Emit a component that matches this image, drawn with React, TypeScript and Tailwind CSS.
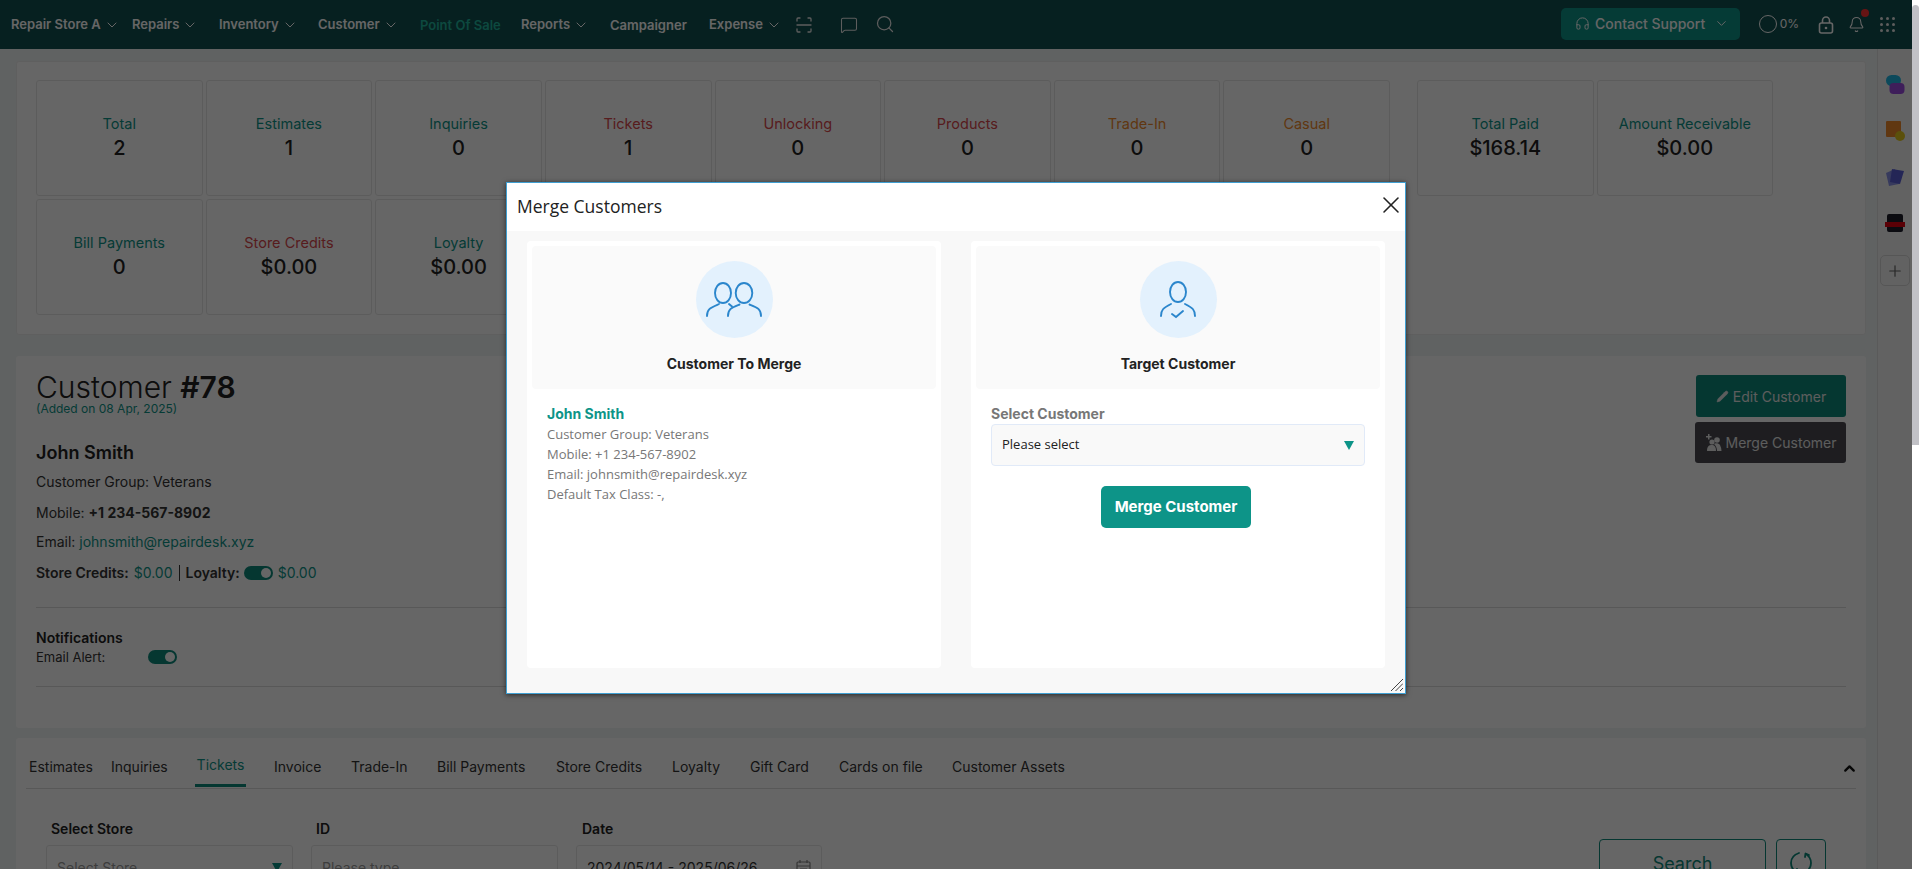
import { Bell, ChevronDown, ChevronUp, Headphones, MessageSquare, Pencil, Plus, Search, X } from 'lucide-react';

const inter = "font-['Inter',sans-serif]";
const openSans = "font-['Open_Sans',sans-serif]";

const navItems = [
  { label: 'Repair Store A', width: 'w-[121px]', arrow: true },
  { label: 'Repairs', width: 'w-[87px]', arrow: true },
  { label: 'Inventory', width: 'w-[99px]', arrow: true },
  { label: 'Customer', width: 'w-[102px]', arrow: true },
  { label: 'Point Of Sale', width: 'w-[101px]', active: true },
  { label: 'Reports', width: 'w-[89px]', arrow: true },
  { label: 'Campaigner', width: 'w-[99px]' },
  { label: 'Expense', width: 'w-[87px]', arrow: true },
];

const stats = [
  { label: 'Total', value: '2', color: 'text-[#0d9488]' },
  { label: 'Estimates', value: '1', color: 'text-[#0d9488]' },
  { label: 'Inquiries', value: '0', color: 'text-[#0d9488]' },
  { label: 'Tickets', value: '1', color: 'text-[#d9484c]' },
  { label: 'Unlocking', value: '0', color: 'text-[#d9484c]' },
  { label: 'Products', value: '0', color: 'text-[#d9484c]' },
  { label: 'Trade-In', value: '0', color: 'text-[#f08a2c]' },
  { label: 'Casual', value: '0', color: 'text-[#f08a2c]' },
  { label: 'Bill Payments', value: '0', color: 'text-[#0d9488]' },
  { label: 'Store Credits', value: '$0.00', color: 'text-[#d9484c]' },
  { label: 'Loyalty', value: '$0.00', color: 'text-[#0d9488]' },
];

const tabs = [
  { label: 'Estimates', width: 'w-[82px]' },
  { label: 'Inquiries', width: 'w-[86px]' },
  { label: 'Tickets', width: 'w-[77px]', active: true },
  { label: 'Invoice', width: 'w-[77px]' },
  { label: 'Trade-In', width: 'w-[86px]' },
  { label: 'Bill Payments', width: 'w-[119px]' },
  { label: 'Store Credits', width: 'w-[116px]' },
  { label: 'Loyalty', width: 'w-[78px]' },
  { label: 'Gift Card', width: 'w-[89px]' },
  { label: 'Cards on file', width: 'w-[113px]' },
  { label: 'Customer Assets', width: 'w-[120px]' },
];

function StatCell({ label, value, color }: { label: string; value: string; color: string }) {
  return (
    <div className="h-[116px] rounded-[3px] border border-[#e6e6e6] flex flex-col items-center justify-center pt-[1px]">
      <div className={`text-[14.5px] leading-[20px] ${color}`}>{label}</div>
      <div className="text-[20px] leading-[29px] font-medium text-[#222]">{value}</div>
    </div>
  );
}

function Toggle() {
  return (
    <span className="inline-flex w-[29px] h-[14px] rounded-full bg-[#0d8a7c] items-center justify-end pr-[2px]">
      <span className="w-[10px] h-[10px] rounded-full bg-white" />
    </span>
  );
}

function TwoUsers() {
  return (
    <svg width="56" height="35" viewBox="0 0 56 35" fill="none" stroke="#2b86cc" strokeWidth="1.9" strokeLinecap="round">
      <ellipse cx="17" cy="11" rx="8" ry="10" />
      <ellipse cx="38" cy="11" rx="8.300" ry="10" />
      <path d="M1 34 C1 27 4 26 13 22" />
      <path d="M23 22 L26 24.500" />
      <path d="M22 34 C22 27 25 26 33.500 22.500" />
      <path d="M43.500 22.500 C52 26 55 27 55 34" />
    </svg>
  );
}

function UserCheck() {
  return (
    <svg width="36" height="38" viewBox="0 0 36 38" fill="none" stroke="#2b86cc" strokeWidth="1.9" strokeLinecap="round">
      <ellipse cx="18" cy="11" rx="8" ry="10" />
      <path d="M1 35 C1 29 3 27 11 23" />
      <path d="M25 23 C33 27 35 29 35 35" />
      <path d="M12 33 L16 36 L23 30" />
    </svg>
  );
}

function ScanIcon() {
  return (
    <svg width="16" height="16" viewBox="0 0 16 16" fill="none" stroke="#e8e8e8" strokeWidth="1.3" strokeLinecap="round">
      <path d="M1 4 V2 Q1 1 2 1 H4 M12 1 H14 Q15 1 15 2 V4 M15 12 V14 Q15 15 14 15 H12 M4 15 H2 Q1 15 1 14 V12 M1 8 H15" />
    </svg>
  );
}

function LockIcon() {
  return (
    <svg className="ml-[19px]" width="16" height="18" viewBox="0 0 16 18" fill="none" stroke="#fff" strokeWidth="1.6">
      <rect x="1.500" y="7" width="13" height="10" rx="2" />
      <path d="M4.500 7 V4.500 A3.500 3.500 0 0 1 11.500 4.500 V7" />
      <circle cx="8" cy="12" r="1.300" fill="#fff" stroke="none" />
    </svg>
  );
}

function RefreshIcon() {
  return (
    <svg width="22" height="26" viewBox="0 0 22 26" fill="none" stroke="#0d8a7c" strokeWidth="1.8" strokeLinecap="round" strokeLinejoin="round">
      <path d="M9 3 C3 5 1 9 1 13 C1 17 3 20 6 22" />
      <path d="M13 23 C19 21 21 17 21 13 C21 9 19 6 16 4" />
      <path d="M3 21 L6.500 22.500 L7 19" />
      <path d="M19 5 L15.500 3.500 L15 7" />
    </svg>
  );
}

function MergeIcon() {
  return (
    <svg width="17" height="17" viewBox="0 0 17 17" fill="#e8e8e8">
      <path d="M3 0 H4.500 V2 H6.500 V3.500 H4.500 V5.500 H3 V3.500 H1 V2 H3 Z" />
      <circle cx="7" cy="8" r="2.600" />
      <circle cx="12" cy="6" r="2.800" />
      <path d="M2 17 C2 12 4 11 7 11 C9 11 11 12 11 17 Z" />
      <path d="M9 10 C10 9 14 9 15 11 C16 13 16.500 15 16.500 17 H12 C12 14 11 12 9 10 Z" />
    </svg>
  );
}

function FieldLabel({ children }: { children: string }) {
  return <div className="text-[14px] font-semibold leading-[20px] text-[#222]">{children}</div>;
}

function PanelHead({ title, icon }: { title: string; icon: React.ReactNode }) {
  return (
    <div className="h-[143px] shrink-0 bg-[#fafafa] rounded-[4px] flex flex-col items-center pt-[15px]">
      <div className="w-[77px] h-[77px] rounded-full bg-[#e3f1fd] flex items-center justify-center">{icon}</div>
      <div className="mt-[16px] text-[14px] font-bold leading-[20px] text-[#222]">{title}</div>
    </div>
  );
}

function MergeModal() {
  return (
    <div className="absolute left-[506px] top-[182px] w-[900px] h-[512px] border border-[#3f9fd2] bg-[#f8f8f8] shadow-[0_1px_5px_rgba(0,0,0,0.6)] flex flex-col">
      <div className="h-[48px] shrink-0 bg-white flex items-center justify-between pl-[10px]">
        <h4 className={`${openSans} text-[17.5px] font-medium text-[#222] mb-[2px]`}>Merge Customers</h4>
        <X className="w-[28px] h-[28px] text-[#222] -mt-[4px]" strokeWidth={1.3} />
      </div>
      <div className="flex-1 grid grid-cols-2 gap-[30px] pl-[20px] pr-[20px] pt-[10px] pb-[25px]">
        <div className="bg-white rounded-[4px] p-[5px] flex flex-col">
          <PanelHead title="Customer To Merge" icon={<TwoUsers />} />
          <div className={`pl-[15px] pt-[15px] ${openSans} text-[13px] leading-[20px] text-[#777]`}>
            <div className={`${inter} text-[14px] font-bold text-[#0d9488]`}>John Smith</div>
            <div>Customer Group: Veterans</div>
            <div>Mobile: +1 234-567-8902</div>
            <div>Email: johnsmith@repairdesk.xyz</div>
            <div>Default Tax Class: -,</div>
          </div>
        </div>
        <div className="bg-white rounded-[4px] p-[5px] flex flex-col">
          <PanelHead title="Target Customer" icon={<UserCheck />} />
          <div className="px-[15px] pt-[15px]">
            <div className="text-[14px] font-bold leading-[20px] text-[#777]">Select Customer</div>
            <div className="h-[42px] rounded-[4px] border border-[#e1eaf8] bg-[#f9f9f9] flex items-center justify-between pl-[10px] pr-[10px]">
              <span className={`${openSans} text-[13px] text-[#222]`}>Please select</span>
              <span className="w-0 h-0 border-x-[5px] border-x-transparent border-t-[9px] border-t-[#0d9488]" />
            </div>
            <div className="flex justify-center pt-[20px] pr-[4px]">
              <button className="w-[150px] h-[42px] rounded-[5px] bg-[#0d9488] text-white text-[15px] font-bold">Merge Customer</button>
            </div>
          </div>
        </div>
      </div>
      <svg className="absolute right-[2px] bottom-[2px]" width="12" height="12" viewBox="0 0 12 12" stroke="#444" strokeWidth="1">
        <path d="M0 12 L12 0 M4.500 12 L12 4.500 M9 12 L12 9" />
      </svg>
    </div>
  );
}

export default function App() {
  return (
    <div className={`relative w-[1919px] h-[869px] overflow-hidden bg-[#f1f5f5] ${inter} flex`}>
      <div className="relative w-[1912px] h-full flex flex-col overflow-hidden">
        <header className="h-[49px] shrink-0 bg-[#115050] flex items-center pl-[11px] text-white">
          {navItems.map((item) => (
            <div key={item.label} className={`${item.width} flex items-center gap-[3px] text-[13px] font-semibold ${item.active ? 'text-[#20b69f]' : ''} ${item.arrow ? '' : 'mt-[2px]'}`}>
              {item.label}
              {item.arrow && <ChevronDown className="w-[16px] h-[16px]" strokeWidth={1.5} />}
            </div>
          ))}
          <ScanIcon />
          <MessageSquare className="ml-[28px] w-[18px] h-[18px] text-[#e8e8e8]" strokeWidth={1.4} />
          <Search className="ml-[17px] w-[20px] h-[20px] -mt-[2px] text-[#e8e8e8]" strokeWidth={1.5} />
          <div className="ml-auto flex items-center">
            <div className="w-[179px] h-[32px] -mt-[2px] rounded-[5px] bg-[#0d9488] flex items-center justify-center gap-[5px] pl-[4px] text-[14px] font-medium">
              <Headphones className="w-[15px] h-[15px]" strokeWidth={1.6} />
              Contact Support
              <ChevronDown className="ml-[4px] w-[15px] h-[15px]" strokeWidth={1.6} />
            </div>
            <span className="ml-[19px] -mt-[2px] w-[18px] h-[18px] rounded-full border-[1.5px] border-white" />
            <span className="ml-[3px] -mt-[2px] text-[12px]">0%</span>
            <LockIcon />
            <div className="relative ml-[14px]">
              <Bell className="w-[17px] h-[19px]" strokeWidth={1.5} />
              <span className="absolute -top-[6px] right-[-4px] w-[8px] h-[8px] rounded-full bg-[#ff3333]" />
            </div>
            <div className="ml-[15px] mr-[17px] grid grid-cols-3 gap-[3px]">
              {Array.from({ length: 9 }).map((_, i) => (
                <span key={i} className="w-[3px] h-[3px] rounded-full bg-[#e8e8e8]" />
              ))}
            </div>
          </div>
        </header>

        <div className="flex-1 flex min-h-0">
          <main className="w-[1877px] pl-[16px] pr-[11px] pt-[12px] flex flex-col">
            <section className="h-[274px] shrink-0 bg-white border border-[#eee] rounded-[3px] pl-[19px] pt-[18px] flex gap-[27px]">
              <div className="w-[1354px] grid grid-cols-8 gap-x-[3px] gap-y-[3px] content-start">
                {stats.map((s) => (
                  <StatCell key={s.label} {...s} />
                ))}
              </div>
              <div className="w-[356px] grid grid-cols-2 gap-[3px] content-start">
                <StatCell label="Total Paid" value="$168.14" color="text-[#0d9488]" />
                <StatCell label="Amount Receivable" value="$0.00" color="text-[#0d9488]" />
              </div>
            </section>

            <section className="mt-[21px] h-[372px] shrink-0 bg-white rounded-[3px] pl-[20px] pr-[20px] pt-[12px] flex flex-col">
              <div className="flex justify-between h-[239px] shrink-0">
                <div>
                  <h1 className="mt-[2px] text-[30px] leading-[34px] font-light text-[#222]">
                    Customer <span className="font-semibold">#78</span>
                  </h1>
                  <div className="text-[12px] leading-[10px] text-[#0d9488]">(Added on 08 Apr, 2025)</div>
                  <div className="mt-[26px] text-[18px] leading-[26px] font-semibold text-[#222]">John Smith</div>
                  <div className="mt-[6px] text-[14px] leading-[20px] text-[#333]">Customer Group: Veterans</div>
                  <div className="mt-[11px] text-[14px] leading-[20px] text-[#333]">
                    Mobile: <span className="font-bold">+1 234-567-8902</span>
                  </div>
                  <div className="mt-[9px] text-[14px] leading-[20px] text-[#333]">
                    Email: <span className="text-[#0d9488]">johnsmith@repairdesk.xyz</span>
                  </div>
                  <div className="mt-[11px] text-[14px] leading-[20px] text-[#333] flex items-center">
                    <span className="font-semibold">Store Credits:</span>
                    <span className="ml-[5px] text-[#0d9488]">$0.00</span>
                    <span className="mx-[6px] w-px h-[16px] bg-[#333]" />
                    <span className="font-semibold">Loyalty:</span>
                    <span className="ml-[4px] mr-[5px] flex"><Toggle /></span>
                    <span className="text-[#0d9488]">$0.00</span>
                  </div>
                </div>
                <div className="pt-[7px] flex flex-col items-end gap-[5px]">
                  <button className="w-[150px] h-[42px] rounded-[3px] bg-[#0d8a7c] text-[#e8e8e8] text-[14px] flex items-center justify-center gap-[4px]">
                    <Pencil className="w-[13px] h-[13px] fill-current" strokeWidth={1} />
                    Edit Customer
                  </button>
                  <button className="w-[151px] h-[41px] rounded-[3px] bg-[#4b4a52] text-[#e8e8e8] text-[14px] flex items-center justify-center gap-[4px]">
                    <MergeIcon />
                    Merge Customer
                  </button>
                </div>
              </div>
              <div className="border-t border-[#ddd] pt-[20px]">
                <div className="text-[14px] leading-[19px] font-semibold text-[#222]">Notifications</div>
                <div className="flex items-center text-[13px] leading-[20px] text-[#333]">
                  <span className="w-[112px]">Email Alert:</span>
                  <Toggle />
                </div>
              </div>
              <div className="mt-[19px] border-t border-[#ddd]" />
            </section>

            <section className="mt-[10px] flex-1 bg-white rounded-t-[3px] pl-[10px] pr-[10px] flex flex-col min-h-0">
              <div className="h-[51px] shrink-0 border-b border-[#ddd] flex items-end pl-[3px] relative">
                {tabs.map((t) => (
                  <div key={t.label} className={`${t.width} shrink-0 h-[50px] flex items-start pt-[19px] text-[14px] leading-[20px] ${t.active ? 'text-[#0d9488]' : 'text-[#333]'}`}>
                    {t.active ? (
                      <span className="h-[32px] border-b-[3px] border-[#0d8a7c] w-[51px] -ml-[2px] text-center -mt-[2px]">{t.label}</span>
                    ) : (
                      t.label
                    )}
                  </div>
                ))}
                <ChevronUp className="absolute right-[-2px] top-[22px] w-[17px] h-[17px] text-[#111]" strokeWidth={3.2} />
              </div>
              <div className="flex pl-[20px] pt-[30px] pr-[30px]">
                <div className="w-[265px] pr-[18px]">
                  <div className="pl-[5px]"><FieldLabel>Select Store</FieldLabel></div>
                  <div className="mt-[6px] h-[44px] rounded-[3px] border border-[#e6e6e6] flex items-center justify-between pl-[10px] pr-[10px] text-[14px] text-[#999]">
                    Select Store
                    <span className="w-0 h-0 border-x-[5px] border-x-transparent border-t-[9px] border-t-[#0d9488]" />
                  </div>
                </div>
                <div className="w-[265px] pr-[18px]">
                  <div className="pl-[5px]"><FieldLabel>ID</FieldLabel></div>
                  <div className="mt-[6px] h-[44px] rounded-[3px] border border-[#e6e6e6] flex items-center pl-[10px] text-[14px] text-[#999]">Please type</div>
                </div>
                <div className="w-[246px]">
                  <div className="pl-[6px]"><FieldLabel>Date</FieldLabel></div>
                  <div className="mt-[6px] h-[44px] rounded-[3px] border border-[#e6e6e6] flex items-center justify-between pl-[10px] pr-[10px] text-[14px] text-[#333]">
                    2024/05/14 - 2025/06/26
                    <svg width="15" height="16" viewBox="0 0 15 16" fill="none" stroke="#888" strokeWidth="1.2"><rect x="1" y="3" width="13" height="12" rx="1" /><path d="M1 7 H14 M4 1 V4 M11 1 V4 M4 10 H11 M4 12.500 H11" /></svg>
                  </div>
                </div>
                <div className="ml-auto mt-[20px] flex gap-[10px]">
                  <button className="w-[167px] h-[48px] rounded-[4px] border border-[#0d8a7c] text-[#0d8a7c] text-[18px]">Search</button>
                  <button className="w-[50px] h-[48px] rounded-[4px] border border-[#0d8a7c] flex items-center justify-center">
                    <RefreshIcon />
                  </button>
                </div>
              </div>
            </section>
          </main>

          <aside className="w-[35px] shrink-0 border-l border-[#e0e0e0] bg-[#f5f5f5] flex flex-col items-center gap-[24px] pt-[25px]">
            <svg width="20" height="22" viewBox="0 0 20 22">
              <rect x="1" y="1" width="15" height="11" rx="5.500" fill="#1fb6e4" />
              <rect x="4.500" y="9" width="15" height="11" rx="4" fill="#9b4be0" />
            </svg>
            <svg width="20" height="22" viewBox="0 0 20 22">
              <rect x="1" y="1" width="15" height="16" rx="1" fill="#f08a2c" />
              <circle cx="15" cy="16" r="5" fill="#e3c91c" />
            </svg>
            <svg width="20" height="22" viewBox="0 0 20 22">
              <path d="M1 7 L10 3 L14 18 L4 20 Z" fill="#8a92e8" />
              <path d="M7 3 L19 5 L15 18 L5 16 Z" fill="#5a60d8" />
            </svg>
            <svg width="20" height="22" viewBox="0 0 20 22">
              <rect x="2" y="2" width="16" height="18" rx="2" fill="#1d1d2a" />
              <rect x="0" y="10" width="20" height="5" fill="#e00010" />
            </svg>
            <div className="-mt-[3px] w-[30px] h-[31px] rounded-[5px] border border-[#d8d8d8] flex items-center justify-center">
              <Plus className="w-[18px] h-[18px] text-[#666]" strokeWidth={1.6} />
            </div>
          </aside>
        </div>

        <div className="absolute inset-0 bg-black/60" />
        <MergeModal />
      </div>

      <div className="w-[7px] h-full bg-white relative">
        <div className="absolute left-0 right-0 top-[5px] h-[440px] bg-[#c1c1c6] rounded-t-[4px]" />
      </div>
    </div>
  );
}
